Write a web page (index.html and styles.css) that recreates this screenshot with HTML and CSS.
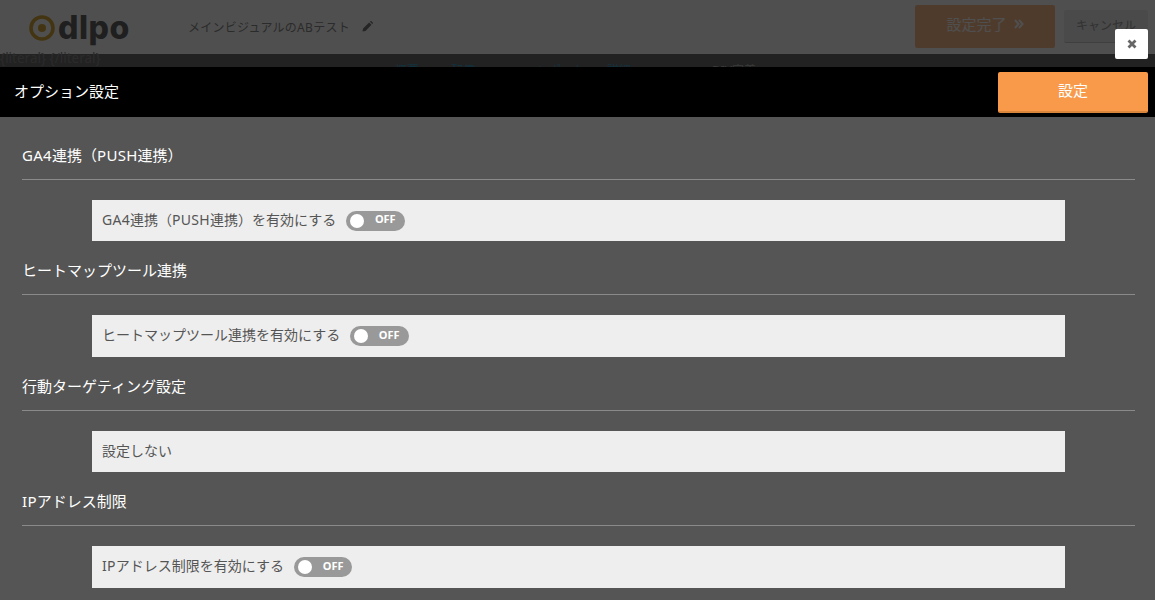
FILE: index.html
```html
<!DOCTYPE html>
<html lang="ja">
<head>
<meta charset="utf-8">
<title>オプション設定</title>
<link rel="stylesheet" href="styles.css">
</head>
<body>
<div class="page">
  <header class="top">
    <div class="logo">
      <svg class="logo-mark" width="26" height="26" viewBox="0 0 26 26"><circle cx="13" cy="13" r="11" fill="none" stroke="#d9a93c" stroke-width="3.6"/><circle cx="13" cy="13" r="4" fill="#d9a93c"/></svg>
      <span class="logo-text">dlpo</span>
    </div>
    <div class="test-name">
      <span>メインビジュアルの<span class="lat">AB</span>テスト</span>
      <svg class="pencil" width="11" height="11" viewBox="0 0 12 12"><path d="M0.5 11.5 L1.2 8.2 L7.8 1.6 L10.4 4.2 L3.8 10.8 Z M8.6 0.8 L9.3 0.2 Q9.8 -0.1 10.3 0.3 L11.7 1.7 Q12.1 2.2 11.8 2.7 L11.2 3.4 Z" fill="#777"/></svg>
    </div>
    <div class="top-actions">
      <button class="btn-done"><span class="done-label">設定完了</span><svg class="chev" width="10" height="10" viewBox="0 0 10 10"><path d="M1 1 L4.5 5 L1 9 M5 1 L8.5 5 L5 9" fill="none" stroke="#fff" stroke-width="2"/></svg></button>
      <button class="btn-cancel">キャンセル</button>
    </div>
  </header>
  <nav class="nav">
    <span class="literal">{literal} {/literal}</span>
    <span class="nav-item nav-a">概要</span>
    <span class="nav-item nav-b">配信</span>
    <span class="nav-item nav-c">レポート</span>
    <span class="nav-item nav-d">詳細</span>
    <span class="nav-item nav-e">DIV定義</span>
  </nav>
</div>
<div class="dim"></div>
<button class="close" aria-label="閉じる">
  <svg width="10" height="10" viewBox="0 0 10 10"><path d="M1.5 1.5 L8.5 8.5 M8.5 1.5 L1.5 8.5" stroke="#666" stroke-width="2.8" fill="none"/></svg>
</button>
<section class="modal">
  <div class="modal-head">
    <h1 class="modal-title">オプション設定</h1>
    <button class="btn-set">設定</button>
  </div>
  <div class="modal-body">
    <h2 class="sec-title"><span><span class="lat">GA4</span>連携（<span class="lat">PUSH</span>連携）</span></h2>
    <div class="row"><span><span class="lat">GA4</span>連携（<span class="lat">PUSH</span>連携）を有効にする</span><span class="toggle"><i class="knob"></i><b>OFF</b></span></div>
    <h2 class="sec-title">ヒートマップツール連携</h2>
    <div class="row">ヒートマップツール連携を有効にする<span class="toggle"><i class="knob"></i><b>OFF</b></span></div>
    <h2 class="sec-title">行動ターゲティング設定</h2>
    <div class="row">設定しない</div>
    <h2 class="sec-title"><span><span class="lat">IP</span>アドレス制限</span></h2>
    <div class="row"><span><span class="lat">IP</span>アドレス制限を有効にする</span><span class="toggle"><i class="knob"></i><b>OFF</b></span></div>
  </div>
</section>
</body>
</html>
```
FILE: styles.css
```css
* { box-sizing: border-box; }
html, body { margin: 0; height: 100%; overflow: hidden; }
body {
  background: #fff;
  font-family: "Noto Sans", "Noto Sans CJK JP", sans-serif;
  color: #333;
}
button { font-family: inherit; border: 0; padding: 0; }
.lat { letter-spacing: 0.3px; }
.top {
  height: 54px;
  display: flex;
  align-items: flex-start;
  background: #fff;
}
.logo {
  width: 188px;
  height: 41px;
  padding: 15px 0 0 29px;
  display: flex;
  align-items: center;
  flex: none;
}
.logo-mark { flex: none; }
.logo-text {
  margin-left: 3px;
  font-family: Inter, sans-serif;
  font-weight: 800;
  font-size: 32px;
  line-height: 26px;
  letter-spacing: 0.5px;
  color: #666;
}
.test-name {
  display: flex;
  align-items: center;
  gap: 12px;
  height: 53px;
  font-size: 12px;
  letter-spacing: 0.25px;
  color: #8b8b8b;
}
.pencil { flex: none; }
.top-actions {
  margin-left: auto;
  display: flex;
  align-items: center;
  gap: 9px;
  padding: 5px 7px 0 0;
}
.btn-done {
  width: 140px;
  height: 43px;
  padding-bottom: 6px;
  display: flex;
  align-items: center;
  justify-content: center;
  gap: 7px;
  background: #ffbe8e;
  border-radius: 2px;
  color: #fff;
  font-size: 15px;
}
.chev { flex: none; margin-top: 1px; }
.btn-cancel {
  width: 84px;
  height: 33px;
  padding-bottom: 2px;
  background: #eee;
  border-bottom: 1px solid #ccc;
  border-radius: 2px;
  color: #a0a0a0;
  font-size: 12px;
}
.nav {
  height: 13px;
  background: #6e6e6e;
  display: flex;
  position: relative;
}
.literal {
  position: absolute;
  left: 0;
  top: -5px;
  font-size: 13.5px;
  line-height: 18px;
  color: #8b8b8b;
}
.nav-item {
  position: absolute;
  top: 9px;
  font-size: 12px;
  line-height: 16px;
}
.nav-a { left: 395px; color: #3ba0c8; }
.nav-b { left: 451px; color: #3ba0c8; }
.nav-c { left: 537px; color: #3ba0c8; }
.nav-d { left: 607px; color: #3ba0c8; }
.nav-e { left: 712px; color: #bbb; }
.dim {
  position: fixed;
  inset: 0;
  background: rgba(0, 0, 0, .69);
}
.modal {
  position: fixed;
  left: 0;
  right: 0;
  top: 67px;
  bottom: 0;
  background: #555;
}
.modal-head {
  height: 50px;
  background: #000;
  display: flex;
  align-items: center;
  justify-content: space-between;
  padding: 0 7px 0 14px;
}
.modal-title {
  margin: -4px 0 0;
  font-size: 15px;
  font-weight: 400;
  color: #fff;
}
.btn-set {
  width: 150px;
  height: 41px;
  margin-top: 1px;
  padding-bottom: 5px;
  background: #f89a4a;
  border-bottom: 2px solid #d9853c;
  border-radius: 2px;
  color: #fff;
  font-size: 15px;
}
.modal-body { padding: 8.75px 20px 0 22px; }
.sec-title {
  margin: 0 0 20px;
  height: 54px;
  padding-bottom: 14px;
  display: flex;
  align-items: flex-end;
  border-bottom: 1px solid #8a8a8a;
  font-size: 15px;
  line-height: 20px;
  font-weight: 400;
  color: #fff;
}
.row {
  margin: 0 70px;
  height: 41.5px;
  padding: 0 10px 4px;
  display: flex;
  align-items: center;
  gap: 10px;
  background: #eee;
  font-size: 14px;
  color: #555;
}
.toggle {
  width: 58.5px;
  height: 20px;
  margin-top: 4px;
  border-radius: 10px;
  background: #999;
  display: flex;
  align-items: center;
  padding: 0 9px 0 4px;
  justify-content: space-between;
  color: #fff;
}
.knob {
  width: 14px;
  height: 14px;
  border-radius: 50%;
  background: #fff;
}
.toggle b { font-size: 11px; line-height: 16px; font-weight: 700; margin-top: -3px; }
.close {
  position: fixed;
  z-index: 2;
  left: 1115px;
  top: 29px;
  width: 33px;
  height: 30px;
  background: #fff;
  border-radius: 2px;
  display: flex;
  align-items: center;
  justify-content: center;
}
```
